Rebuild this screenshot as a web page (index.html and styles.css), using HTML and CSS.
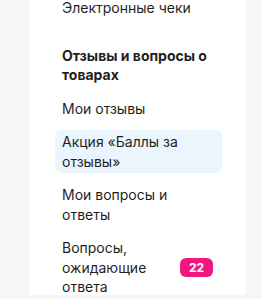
FILE: index.html
```html
<!DOCTYPE html>
<html lang="ru">
<head>
<meta charset="utf-8">
<link rel="stylesheet" href="styles.css">
</head>
<body>
<div class="page">
  <nav class="panel">
    <ul class="menu">
      <li class="item">Электронные чеки</li>
      <li class="heading">Отзывы и вопросы о товарах</li>
      <li class="item">Мои отзывы</li>
      <li class="item active">Акция «Баллы за отзывы»</li>
      <li class="item">Мои вопросы и ответы</li>
      <li class="item with-badge"><span class="label">Вопросы, ожидающие ответа</span><span class="badge">22</span></li>
    </ul>
  </nav>
</div>
</body>
</html>
```

FILE: styles.css
```css
html, body {
  margin: 0;
  padding: 0;
  background: #f6f6f9;
  overflow: hidden;
}
body {
  font-family: Inter, "Noto Sans", "DejaVu Sans", sans-serif;
  color: #1f1f1f;
  font-size: 14px;
  line-height: 19.5px;
}
.page {
  height: 299px;
  padding-left: 30px;
  width: 216px;
}
.panel {
  background: #ffffff;
  height: 100%;
  padding: 0 24px 0 25px;
}
.menu {
  list-style: none;
  margin: -4px 0 0 0;
  padding: 0;
  display: flex;
  flex-direction: column;
  gap: 10px;
}
.item {
  padding: 2px 12px 2px 7px;
  border-radius: 6px;
}
.heading {
  font-weight: 700;
  padding: 2px 8px 2px 7px;
  margin-top: 14px;
}
.active {
  background: #eaf5fd;
}
.with-badge {
  display: flex;
  align-items: center;
  justify-content: space-between;
  gap: 10px;
  padding-right: 9px;
}
.label {
  flex: 1;
  max-width: 110px;
}
.badge {
  background: #f2177f;
  color: #ffffff;
  font-weight: 700;
  font-size: 12px;
  line-height: 19px;
  height: 19px;
  padding: 0 9px;
  border-radius: 6px;
}
```
